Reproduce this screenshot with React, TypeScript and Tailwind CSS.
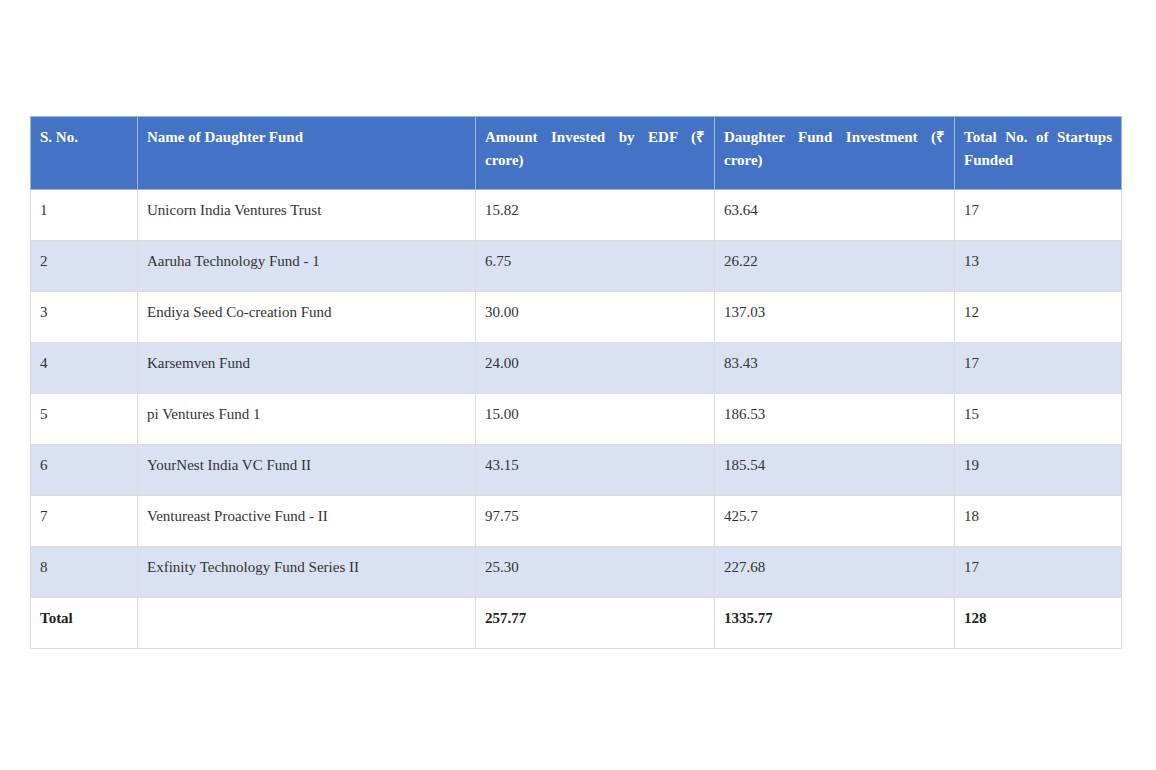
export default function App() {
  const rows = [
    ["1", "Unicorn India Ventures Trust", "15.82", "63.64", "17"],
    ["2", "Aaruha Technology Fund - 1", "6.75", "26.22", "13"],
    ["3", "Endiya Seed Co-creation Fund", "30.00", "137.03", "12"],
    ["4", "Karsemven Fund", "24.00", "83.43", "17"],
    ["5", "pi Ventures Fund 1", "15.00", "186.53", "15"],
    ["6", "YourNest India VC Fund II", "43.15", "185.54", "19"],
    ["7", "Ventureast Proactive Fund - II", "97.75", "425.7", "18"],
    ["8", "Exfinity Technology Fund Series II", "25.30", "227.68", "17"],
  ];
  const heads = ["S. No.", "Name of Daughter Fund", "Amount Invested by EDF (₹ crore)", "Daughter Fund Investment (₹ crore)", "Total No. of Startups Funded"];
  const widths = ["w-[107px]", "w-[338px]", "w-[239px]", "w-[240px]", "w-[167px]"];
  return (
    <div className="w-[1156px] h-[770px] bg-white pt-[116px] pl-[30px]" style={{ fontFamily: '"Liberation Serif", serif' }}>
      <table className="border-collapse w-[1091px] table-fixed text-[15px] text-[#333]">
        <thead>
          <tr className="bg-[#4472c4] text-white font-bold h-[73px]">
            {heads.map((h, i) => (
              <th key={i} className={`${widths[i]} border border-[#9fb6e0] align-top text-justify [text-align-last:left] px-[9px] pt-[9px] leading-[23px] font-bold`}>{h}</th>
            ))}
          </tr>
        </thead>
        <tbody>
          {rows.map((r, ri) => (
            <tr key={ri} className={`h-[51px] ${ri % 2 === 1 ? "bg-[#d9e1f2]" : "bg-white"}`}>
              {r.map((c, ci) => (
                <td key={ci} className="border border-[#dcdcdc] px-[9px] align-top pt-[10px] leading-[20px]">{c}</td>
              ))}
            </tr>
          ))}
          <tr className="h-[51px] bg-white font-bold text-[#222]">
            {["Total", "", "257.77", "1335.77", "128"].map((c, ci) => (
              <td key={ci} className="border border-[#dcdcdc] px-[9px] align-top pt-[10px] leading-[20px]">{c}</td>
            ))}
          </tr>
        </tbody>
      </table>
    </div>
  );
}
